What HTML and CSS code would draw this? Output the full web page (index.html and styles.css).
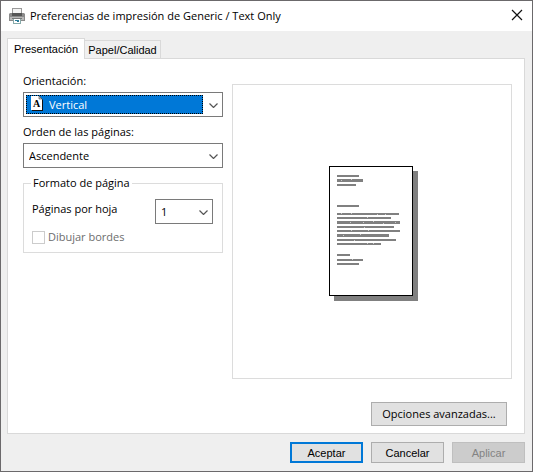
FILE: index.html
```html
<!DOCTYPE html>
<html lang="es">
<head>
    <meta charset="UTF-8">
    <meta name="viewport" content="width=device-width, initial-scale=1.0">
    <title>Preferencias de impresión</title>
    <link rel="stylesheet" href="styles.css">
</head>
<body>
    <div class="window">
        <header class="titlebar">
            <svg class="printer" width="16" height="16" viewBox="0 0 16 16">
                <path fill="#999" d="M3 0h10v6H3z"/>
                <path fill="#f4f4f4" d="M4 1h8v5H4z"/>
                <path fill="#8a8a8a" d="M1 5h14l1 1v7H0V6z"/>
                <path fill="#b8b8b8" d="M1 9h14v3H1z"/>
                <path fill="#555" d="M3 5h10v3H3z"/>
                <path fill="#777" d="M3 10h10v1H3z"/>
                <path fill="#8aa" d="M4 11h8v5H4z"/>
                <path fill="#fff" d="M5 11h6v4H5z"/>
                <path fill="#2d7d9a" d="M6 12h4v1H6zM8 13h2v1H8z"/>
            </svg>
            <h1>Preferencias de impresión de Generic / Text Only</h1>
            <button type="button" class="close" aria-label="Cerrar">
                <svg width="12" height="12" viewBox="0 0 12 12"><path d="M1 1l10 10M11 1L1 11" stroke="#111" stroke-width="1.2" fill="none"/></svg>
            </button>
        </header>

        <form class="content">
            <div class="tabs" role="tablist">
                <button type="button" class="tab active" role="tab" aria-selected="true">Presentación</button>
                <button type="button" class="tab" role="tab" aria-selected="false">Papel/Calidad</button>
            </div>

            <div class="panel" role="tabpanel">
                <div class="columns">
                    <div class="settings">
                        <label for="orientation">Orientación:</label>
                        <div class="combo focused">
                            <span class="highlight">
                                <svg width="12" height="15" viewBox="0 0 12 15">
                                    <path d="M1 1h8l3 3v11H1z" fill="#111"/>
                                    <path d="M0 0h8l3 3v11H0z" fill="#fff"/>
                                    <path d="M8 0v3h3z" fill="#ccc" stroke="#222" stroke-width=".5"/>
                                    <text x="5.5" y="11" text-anchor="middle">A</text>
                                </svg>
                            </span>
                            <select id="orientation">
                                <option>Vertical</option>
                                <option>Horizontal</option>
                            </select>
                            <svg class="arrow" width="9" height="5" viewBox="0 0 9 5"><path d="M.5 .5l4 4l4-4"/></svg>
                        </div>

                        <label for="order">Orden de las páginas:</label>
                        <div class="combo">
                            <select id="order">
                                <option>Ascendente</option>
                                <option>Descendente</option>
                            </select>
                            <svg class="arrow" width="9" height="5" viewBox="0 0 9 5"><path d="M.5 .5l4 4l4-4"/></svg>
                        </div>

                        <fieldset>
                            <legend>Formato de página</legend>
                            <div class="row">
                                <label for="sheets">Páginas por hoja</label>
                                <div class="combo small">
                                    <select id="sheets">
                                        <option>1</option>
                                        <option>2</option>
                                        <option>4</option>
                                    </select>
                                    <svg class="arrow" width="9" height="5" viewBox="0 0 9 5"><path d="M.5 .5l4 4l4-4"/></svg>
                                </div>
                            </div>
                            <div class="check">
                                <input type="checkbox" id="borders" disabled>
                                <label for="borders">Dibujar bordes</label>
                            </div>
                        </fieldset>
                    </div>

                    <div class="preview">
                        <svg width="92" height="138" viewBox="-3 -3 92 138" shape-rendering="crispEdges">
                            <path fill="#808080" d="M5 5h84v130H5z"/>
                            <path fill="#000" d="M0 0h84v130H0z"/>
                            <path fill="#fff" d="M1 1h82v128H1z"/>
                            <g fill="#808080">
                                <path d="M8 9h22v2H8zM8 13h26v3H8zM8 18h19v2H8z"/>
                                <path d="M8 39h22v2H8z"/>
                                <path d="M8 47h62v2H8zM8 51h54v2H8zM8 55h63v3H8zM8 60h57v2H8zM8 64h63v2H8zM8 68h52v3H8zM8 73h59v2H8zM8 77h44v2H8z"/>
                                <path d="M8 88h13v2H8zM8 93h26v2H8zM8 97h22v2H8z"/>
                            </g>
                            <path fill="#ccc" d="M12 14h1v1h-1zM22 13h1v1h-1zM12 47h1v1h-1zM22 47h1v1h-1zM48 48h1v1h-1zM56 48h1v1h-1zM38 51h1v1h-1zM21 56h1v1h-1zM34 56h1v1h-1zM44 55h1v1h-1zM54 57h1v1h-1zM66 56h1v1h-1zM35 61h1v1h-1zM22 64h1v1h-1zM39 64h1v1h-1zM14 69h1v1h-1zM31 68h1v1h-1zM25 74h1v1h-1zM38 77h1v1h-1zM44 77h1v1h-1zM23 93h1v1h-1z"/>
                        </svg>
                    </div>
                </div>

                <div class="advanced">
                    <button type="button" class="btn">Opciones avanzadas...</button>
                </div>
            </div>

            <footer class="actions">
                <button type="submit" class="btn default">Aceptar</button>
                <button type="button" class="btn">Cancelar</button>
                <button type="button" class="btn" disabled>Aplicar</button>
            </footer>
        </form>
    </div>
</body>
</html>
```
FILE: styles.css
```css
* {
    box-sizing: border-box;
}
body {
    margin: 0;
    font-family: "Open Sans", "Noto Sans", sans-serif;
    font-size: 11px;
    line-height: 16px;
    color: #000;
}
button, select {
    font: inherit;
    color: inherit;
}
svg {
    display: block;
}
.window {
    display: flex;
    flex-direction: column;
    min-height: 100vh;
    border: 1px solid #6b696b;
    background-color: #efefef;
}

/* title bar */
.titlebar {
    display: flex;
    align-items: center;
    height: 30px;
    padding: 0 8px;
    background-color: #fff;
}
.titlebar h1 {
    flex: 1;
    margin: 0 0 0 5px;
    font-size: 11px;
    font-weight: normal;
}
.close {
    padding: 0 1px 2px 0;
    border: none;
    background: none;
}

/* tabs */
.content {
    flex: 1;
    display: flex;
    flex-direction: column;
    padding: 7px 7px 8px 6px;
}
.tabs {
    display: flex;
    align-items: flex-end;
    font-family: "Liberation Sans", Arial, sans-serif;
}
.tab {
    width: 76px;
    height: 18px;
    padding: 0;
    border: 1px solid #d9d9d9;
    border-width: 1px 1px 0 0;
    background-color: #f0f0f0;
}
.tab.active {
    position: relative;
    width: 78px;
    height: 21px;
    margin-bottom: -1px;
    padding-bottom: 1px;
    border-left-width: 1px;
    background-color: #fff;
}
.panel {
    flex: 1;
    display: flex;
    flex-direction: column;
    padding: 25px 12px 7px 15px;
    border: 1px solid #d9d9d9;
    background-color: #fff;
}
.columns {
    flex: 1;
    display: flex;
    gap: 9px;
}

/* left column */
.settings {
    width: 200px;
    margin-top: -11px;
}
.settings > label {
    display: block;
    margin-bottom: 3px;
}
.combo {
    position: relative;
    height: 25px;
    margin-bottom: 7px;
    border: 1px solid #7a7a7a;
    background-color: #fff;
}
.combo select {
    position: relative;
    display: block;
    width: 100%;
    height: 100%;
    padding: 0 20px 0 5px;
    border: none;
    outline: none;
    appearance: none;
    background: transparent;
}
.combo .arrow {
    position: absolute;
    top: 10px;
    right: 4px;
    pointer-events: none;
}
.arrow path {
    fill: none;
    stroke: #555;
    stroke-width: 1.2;
}
.focused select {
    padding-left: 25px;
    color: #fff;
}
.highlight {
    position: absolute;
    top: 2px;
    right: 19px;
    bottom: 2px;
    left: 2px;
    padding: 0 4px;
    border: 1px dotted #ffd9a0;
    outline: 1px dotted #000;
    outline-offset: -1px;
    background-color: #0078d7;
}
.highlight text {
    font: bold 10px "Liberation Serif", serif;
}
fieldset {
    margin: 0;
    padding: 8px 9px 7px 8px;
    border: 1px solid #dcdcdc;
}
legend {
    padding: 0 2px;
    margin-left: -1px;
}
.row {
    display: flex;
    justify-content: space-between;
}
.row > label {
    padding-top: 2px;
}
.combo.small {
    width: 58px;
    margin: 0;
}
.check {
    display: flex;
    align-items: center;
    gap: 3px;
    margin-top: 5px;
    color: #6d6d6d;
}
.check input {
    width: 13px;
    height: 13px;
    margin: 0;
    border: 1px solid #ccc;
    appearance: none;
    background-color: #fff;
}

/* page preview */
.preview {
    flex: 1;
    display: flex;
    align-items: center;
    justify-content: center;
    border: 1px solid #dcdcdc;
}

/* buttons */
.btn {
    padding: 0 9px;
    border: 1px solid #adadad;
    background-color: #e1e1e1;
}
.advanced {
    display: flex;
    justify-content: flex-end;
    margin-top: 23px;
    padding-right: 5px;
}
.advanced .btn {
    min-width: 136px;
    height: 24px;
}
.actions {
    display: flex;
    justify-content: flex-end;
    gap: 8px;
    margin-top: 8px;
    font-family: "Liberation Sans", Arial, sans-serif;
}
.actions .btn {
    width: 73px;
    height: 21px;
}
.actions .default {
    border: 2px solid #0078d7;
}
.btn:disabled {
    border-color: #bfbfbf;
    background-color: #ccc;
    color: #838383;
}
```
